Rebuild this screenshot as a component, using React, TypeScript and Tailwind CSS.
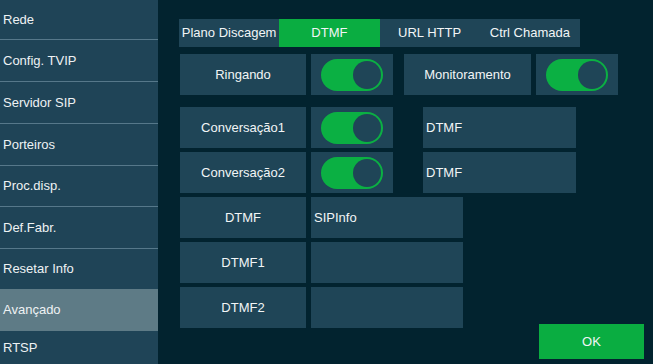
import React from "react";

const menu = [
  { label: "Rede", h: "h-[40px]", line: true },
  { label: "Config. TVIP", h: "h-[42px]", line: true },
  { label: "Servidor SIP", h: "h-[42px]", line: true },
  { label: "Porteiros", h: "h-[42px]", line: true },
  { label: "Proc.disp.", h: "h-[41px]", line: true },
  { label: "Def.Fabr.", h: "h-[42px]", line: true },
  { label: "Resetar Info", h: "h-[40px]", line: false },
  { label: "Avançado", h: "h-[42px]", line: false, active: true },
  { label: "RTSP", h: "h-[33px]", line: false },
];

const tabs = ["Plano Discagem", "DTMF", "URL HTTP", "Ctrl Chamada"];

function Toggle() {
  return (
    <div className="w-[82px] h-[41px] bg-[#1f4557] flex items-center justify-center">
      <div className="w-[62px] h-[32px] rounded-full bg-[#0bb043] flex items-center justify-end pr-[2px]">
        <div className="w-[28px] h-[28px] rounded-full bg-[#1f4557]" />
      </div>
    </div>
  );
}

function Cell({ text, w, left }: { text?: string; w: string; left?: boolean }) {
  return (
    <div
      className={`${w} h-[41px] bg-[#1f4557] flex items-center text-[13px] text-[#f2f5f6] ${
        left ? "justify-start pl-[3px]" : "justify-center"
      }`}
    >
      {text}
    </div>
  );
}

export default function App() {
  return (
    <div
      className="w-[653px] h-[364px] flex bg-[#02232f] overflow-hidden"
      style={{ fontFamily: '"Liberation Sans", Arial, sans-serif' }}
    >
      <div className="w-[158px] shrink-0 flex flex-col bg-[#1f4457]">
        {menu.map((m) => (
          <div
            key={m.label}
            className={`${m.h} shrink-0 flex items-center pl-[3px] text-[13px] text-[#eef2f4] ${
              m.active ? "bg-[#5e7b86]" : ""
            } ${m.line ? "border-b border-[#56788a]" : ""}`}
          >
            {m.label}
          </div>
        ))}
      </div>

      <div className="flex-1 flex flex-col">
        <div className="mt-[19px] ml-[21px] flex h-[28px] w-[401px] bg-[#1f4557] text-[13px] text-[#f2f5f6]">
          {tabs.map((t, i) => (
            <div
              key={t}
              className={`flex-1 flex items-center justify-center ${i === 1 ? "bg-[#0aad41]" : ""}`}
            >
              {t}
            </div>
          ))}
        </div>

        <div className="mt-[7px] ml-[22px] flex">
          <Cell text="Ringando" w="w-[126px]" />
          <div className="ml-[5px]">
            <Toggle />
          </div>
          <div className="ml-[11px]">
            <Cell text="Monitoramento" w="w-[127px]" />
          </div>
          <div className="ml-[5px]">
            <Toggle />
          </div>
        </div>

        <div className="mt-[12px] ml-[22px] flex flex-col gap-[4px]">
          <div className="flex">
            <Cell text="Conversação1" w="w-[126px]" />
            <div className="ml-[5px]">
              <Toggle />
            </div>
            <div className="ml-[30px]">
              <Cell text="DTMF" w="w-[153px]" left />
            </div>
          </div>
          <div className="flex">
            <Cell text="Conversação2" w="w-[126px]" />
            <div className="ml-[5px]">
              <Toggle />
            </div>
            <div className="ml-[30px]">
              <Cell text="DTMF" w="w-[153px]" left />
            </div>
          </div>
          <div className="flex gap-[5px]">
            <Cell text="DTMF" w="w-[126px]" />
            <Cell text="SIPInfo" w="w-[152px]" left />
          </div>
          <div className="flex gap-[5px]">
            <Cell text="DTMF1" w="w-[126px]" />
            <Cell w="w-[152px]" />
          </div>
          <div className="flex items-start justify-between">
            <div className="flex gap-[5px]">
              <Cell text="DTMF2" w="w-[126px]" />
              <Cell w="w-[152px]" />
            </div>
            <button className="mt-[37px] mr-[9px] w-[105px] h-[35px] bg-[#0aad41] text-[13px] text-[#f2f5f6]">
              OK
            </button>
          </div>
        </div>
      </div>
    </div>
  );
}
